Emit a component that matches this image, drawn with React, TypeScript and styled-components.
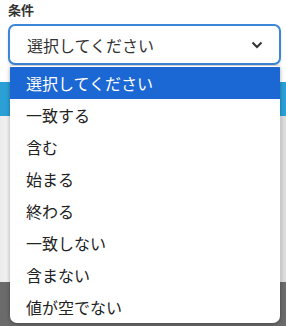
import React from 'react'
import styled, { createGlobalStyle } from 'styled-components'

const GlobalStyle = createGlobalStyle`
  html, body {
    margin: 0;
    padding: 0;
    background: #ffffff;
  }
  body {
    font-family: "Noto Sans CJK JP", "Noto Sans", sans-serif;
  }
`

const Page = styled.div`
  position: relative;
  width: 286px;
  height: 326px;
  overflow: hidden;
  display: flex;
  flex-direction: column;
`

const Field = styled.div`
  padding: 0 5px 0 8px;
  display: flex;
  flex-direction: column;
`

const Label = styled.label`
  font-size: 13px;
  font-weight: 700;
  color: #333;
  line-height: 18px;
  padding-top: 1px;
  height: 23px;
`

const SelectBox = styled.div`
  box-sizing: border-box;
  height: 41px;
  border: 2px solid #3b86d8;
  border-radius: 7px;
  background: #fff;
  display: flex;
  align-items: center;
  justify-content: space-between;
  padding: 0 16px 0 17px;
  font-size: 16px;
  color: #333;
  box-shadow: 0 2px 3px rgba(0, 0, 0, 0.12);
`

const Band = styled.div`
  margin-top: 17px;
  height: 34px;
  background: #2ba0d7;
`

const Content = styled.div`
  flex: 1;
  background: linear-gradient(to right, #ebebeb 0, #f3f3f3 9px, #fafafa 10px, #fafafa 280px, #dcdcdc 281px);
`

const Footer = styled.div`
  height: 44px;
  background: #6b6b6b;
`

const Menu = styled.ul`
  position: absolute;
  top: 66px;
  left: 10px;
  width: 270px;
  margin: 0;
  padding: 1px 0 0;
  list-style: none;
  background: #fff;
  border-radius: 2px 2px 7px 7px;
  box-shadow: 0 1px 4px rgba(0, 0, 0, 0.35);
  overflow: hidden;
`

const Option = styled.li<{ $active?: boolean }>`
  height: 32px;
  display: flex;
  align-items: center;
  padding-left: 16px;
  font-size: 16px;
  color: ${p => (p.$active ? '#fff' : '#222')};
  background: ${p => (p.$active ? '#1b67d3' : 'transparent')};
`

const options = ['選択してください', '一致する', '含む', '始まる', '終わる', '一致しない', '含まない', '値が空でない']

const Chevron = () => (
  <svg width="12" height="8" viewBox="0 0 12 8">
    <path d="M1.5 1.5 L6 6 L10.5 1.5" fill="none" stroke="#333" strokeWidth="2" />
  </svg>
)

export default function App() {
  return (
    <>
      <GlobalStyle />
      <Page>
        <Field>
          <Label>条件</Label>
          <SelectBox>
            <span>選択してください</span>
            <Chevron />
          </SelectBox>
        </Field>
        <Band />
        <Content />
        <Footer />
        <Menu>
          {options.map((o, i) => (
            <Option key={o} $active={i === 0}>
              {o}
            </Option>
          ))}
        </Menu>
      </Page>
    </>
  )
}
